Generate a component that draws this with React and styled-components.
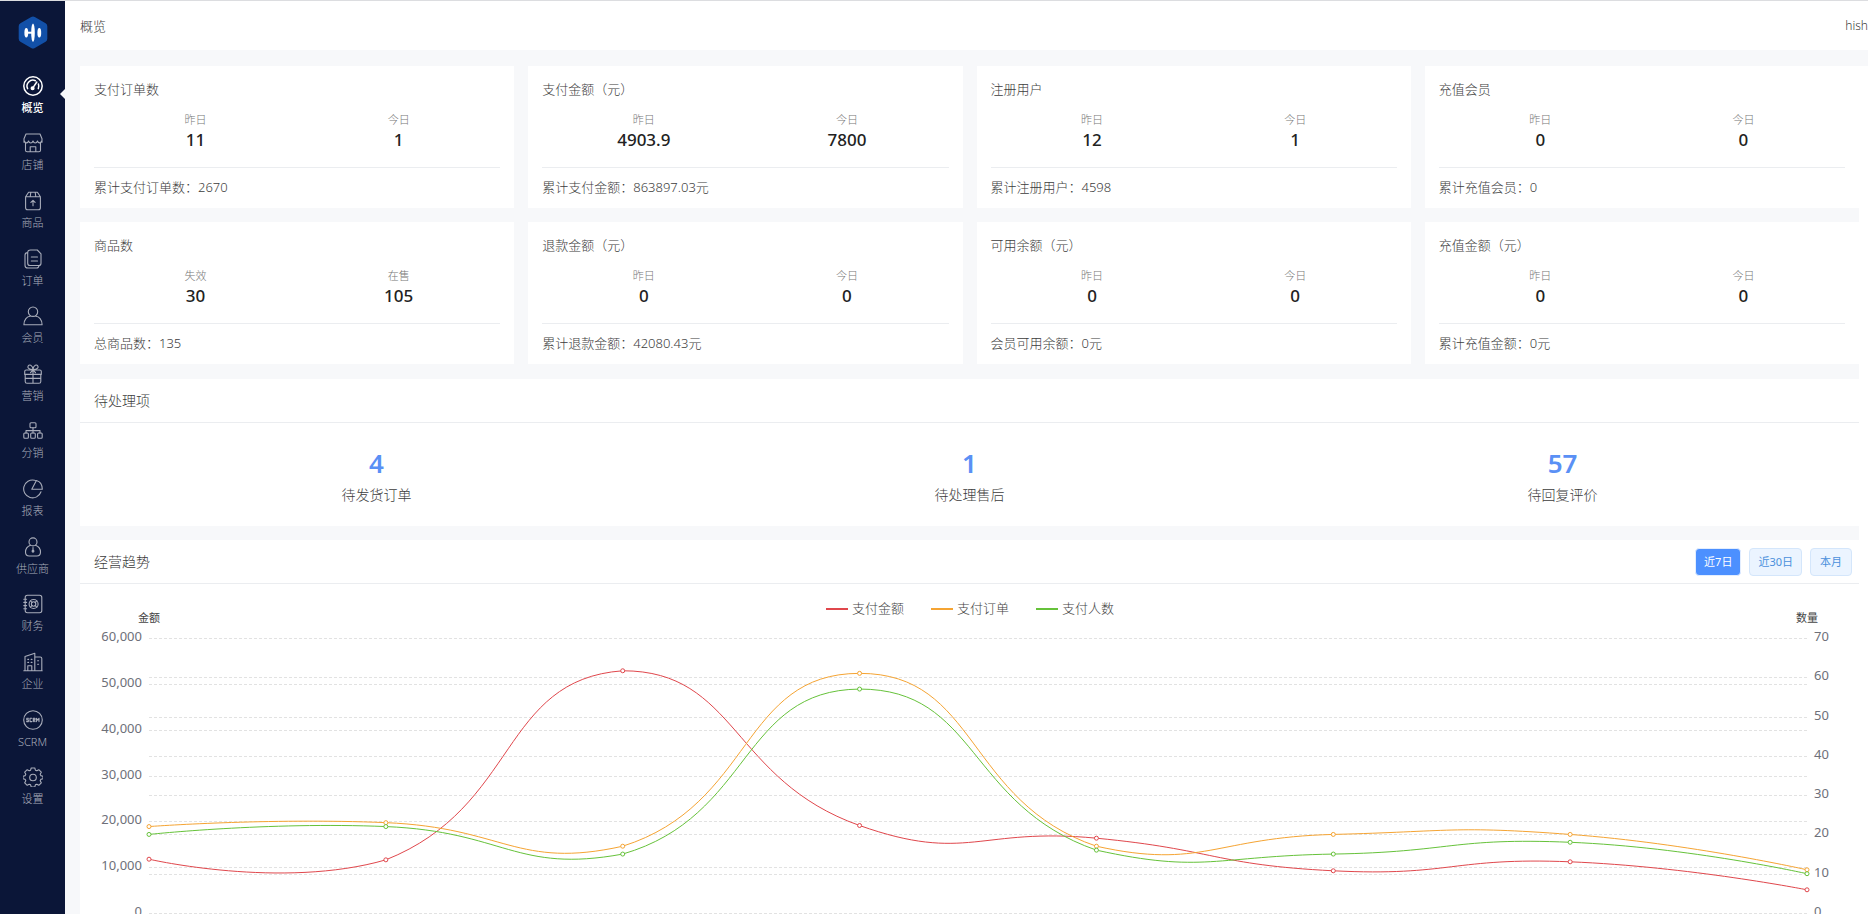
import React, { useLayoutEffect, useRef, useState } from 'react';
import styled, { createGlobalStyle } from 'styled-components';

const GlobalStyle = createGlobalStyle`
  * {
    box-sizing: border-box;
  }
  body {
    margin: 0;
    background: #f7f8fa;
    color: #3c3c3c;
    font-family: 'Noto Sans', 'Noto Sans CJK SC', sans-serif;
    font-size: 13px;
    line-height: 20px;
  }
  a {
    color: inherit;
    text-decoration: none;
  }
  h1, h2, p, dl, dd {
    margin: 0;
    font-weight: 300;
  }
`

const Layout = styled.div`
  display: flex;
  height: 100vh;
  overflow: hidden;
  border-top: 1px solid #dcdde0;
`

const Sidebar = styled.aside`
  flex: none;
  width: 65px;
  background: #0b1638;
`

const LogoLink = styled.a`
  display: flex;
  justify-content: center;
  height: 66px;
  padding-top: 15px;
`

const Nav = styled.nav`
  display: flex;
  flex-direction: column;
  height: 749px;
`

const NavItem = styled.a`
  position: relative;
  flex: 1;
  display: flex;
  flex-direction: column;
  align-items: center;
  justify-content: center;
  gap: 4px;
  font-size: 11px;
  line-height: 16px;
  color: ${({ $active }) => ($active ? '#fff' : '#a9adba')};
  font-weight: ${({ $active }) => ($active ? 500 : 300)};
  svg {
    width: 20px;
    height: 20px;
    fill: none;
    stroke: currentColor;
    stroke-width: ${({ $active }) => ($active ? 1.5 : 1.1)};
    stroke-linecap: round;
    stroke-linejoin: round;
  }
  &::after {
    content: '';
    display: ${({ $active }) => ($active ? 'block' : 'none')};
    position: absolute;
    right: 0;
    top: 22px;
    border: 5px solid transparent;
    border-left-width: 0;
    border-right-color: #f7f8fa;
  }
`

const Main = styled.div`
  flex: 1;
  min-width: 0;
  display: flex;
  flex-direction: column;
`

const Header = styled.header`
  flex: none;
  display: flex;
  align-items: center;
  justify-content: space-between;
  height: 49px;
  margin-bottom: 16px;
  padding-left: 15px;
  background: #fff;
  h1 {
    font-size: 13px;
  }
`

const UserName = styled.span`
  font-size: 12px;
  font-weight: 300;
  white-space: nowrap;
`

const Scroller = styled.main`
  flex: 1;
  min-height: 0;
  overflow-y: auto;
  scrollbar-width: none;
  padding-left: 15px;
  border-right: 9px solid #fff;
`

const CardGrid = styled.section`
  display: grid;
  grid-template-columns: repeat(4, 1fr);
  gap: 14px;
  margin-bottom: 15px;
`

const Card = styled.article`
  padding: 13px 14px 0;
  background: #fff;
  h2 {
    font-size: 13px;
  }
`

const Stats = styled.dl`
  display: flex;
  height: 69px;
  padding-top: 13px;
  border-bottom: 1px solid #ebedf0;
`

const Stat = styled.div`
  flex: 1;
  text-align: center;
  dt {
    font-size: 11px;
    line-height: 16px;
    color: #777;
    font-weight: 300;
  }
  dd {
    font-size: 17px;
    line-height: 24px;
    color: #222;
    font-weight: 500;
  }
`

const Total = styled.p`
  height: 40px;
  line-height: 38px;
`

const Panel = styled.section`
  margin-bottom: 14px;
  background: #fff;
`

const PanelHead = styled.div`
  display: flex;
  align-items: center;
  justify-content: space-between;
  height: 44px;
  padding: 0 7px 0 14px;
  border-bottom: 1px solid #ebedf0;
  h2 {
    font-size: 14px;
  }
`

const TodoRow = styled.div`
  display: flex;
  height: 103px;
`

const TodoItem = styled.a`
  flex: 1;
  display: flex;
  flex-direction: column;
  align-items: center;
  justify-content: center;
  font-size: 14px;
  font-weight: 300;
  strong {
    margin-bottom: 4px;
    font-size: 26px;
    line-height: 36px;
    font-weight: 600;
    color: #5a90f5;
  }
`

const RangeGroup = styled.div`
  display: flex;
  gap: 8px;
`

const RangeButton = styled.button`
  min-width: 42px;
  height: 28px;
  padding: 0 8px;
  border: 1px solid ${({ $active }) => ($active ? '#e3eeff' : '#d4e6fb')};
  border-radius: 4px;
  background: ${({ $active }) => ($active ? '#4c90ff' : '#ebf4ff')};
  color: ${({ $active }) => ($active ? '#fff' : '#4a90dc')};
  font: inherit;
  font-size: 11px;
  line-height: 16px;
  cursor: pointer;
`

const ChartBox = styled.div`
  height: 380px;
  svg {
    display: block;
    width: 100%;
    height: 100%;
  }
`

const AxisText = styled.text`
  font-size: ${({ $small }) => ($small ? 11 : 13)}px;
  font-weight: ${({ $light }) => ($light ? 300 : 400)};
  fill: ${({ $small, $light }) => ($small || $light ? '#444' : '#6e7079')};
`

const icons = {
  overview: (
    <>
      <circle cx="10" cy="10" r="9.200" />
      <path d="M4.600 12.600A5.900 5.900 0 0 1 12.400 4.700M15.400 8a6 6 0 0 1-.1 4.600M13.800 6l-3.600 5.400" />
      <circle cx="9.600" cy="12.200" r="1.300" fill="currentColor" />
    </>
  ),
  shop: (
    <>
      <path d="M3 1h14l2 4.800v3.400h-1.200M2.200 9.200H1V5.800L3 1M1 7.600c1.500 3 3.600 3 4.500.4 1 2.600 3.600 2.600 4.500 0 1 2.600 3.500 2.600 4.500 0 1 2.600 3 2.600 4.500-.4M2.500 10v7.200c0 1 .6 1.600 1.600 1.600h11.800c1 0 1.600-.6 1.600-1.600V10M7.200 18.600v-4.900h5.600v4.900" />
    </>
  ),
  goods: (
    <path d="M2.600 5.800h14.800v11c0 1.200-.8 2-2 2H4.600c-1.200 0-2-.8-2-2zM2.600 5.800l3-4.600h8.800l3 4.600M7.200 5.800l.6-4.400M12.800 5.800l-.6-4.400M10 14.800V9.500M7.900 11.400 10 9.300l2.100 2.100" />
  ),
  order: (
    <path d="M7.500 1h6.800L18 4.800v9.400c0 1.500-.8 2.300-2.300 2.300H7c-1.500 0-2.300-.8-2.300-2.300V3.800C4.700 2 5.700 1 7.500 1zM4.700 3.600C2.800 3.600 2 4.500 2 6v10.200c0 1.700 1 2.800 2.800 2.800h8.800c1.300 0 2.100-.8 2.400-2.400M8.300 8h6.200M8.300 12h6.200" />
  ),
  member: (
    <>
      <circle cx="10" cy="5.700" r="4.700" />
      <path d="M.9 18.800c0-5.200 3.200-8.300 6.200-8.500M19.100 18.800c0-5.200-3.200-8.300-6.200-8.500M.9 18.800h18.200" />
    </>
  ),
  marketing: (
    <path d="M3.200 6h13.600c1 0 1.500.5 1.500 1.500v2.900H1.700V7.500C1.700 6.500 2.200 6 3.200 6zM2.200 10.400v7c0 1.200.6 1.800 1.800 1.800h12c1.200 0 1.800-.6 1.800-1.800v-7M2.200 14.400h15.600M10 5v14.200M10 5.500C5.500 5.500 4.400 3.500 5.200 2 6.200.3 9.400.6 10 5.500c.6-4.900 3.800-5.200 4.800-3.500.8 1.500-.3 3.500-4.800 3.500zM10 6 7.500 8.600M10 6l2.500 2.600" />
  ),
  dispatch: (
    <>
      <rect x="7" y="1.800" width="6" height="5" rx="1" />
      <path d="M10 6.800V12M3 12V9.600h14V12" />
      <rect x=".8" y="12" width="4.600" height="5.200" rx="1" />
      <rect x="7.700" y="12" width="4.600" height="5.200" rx="1" />
      <rect x="14.600" y="12" width="4.600" height="5.200" rx="1" />
    </>
  ),
  report: (
    <path d="M11.600 1.300A8.900 8.900 0 1 0 18 12.800M8.800 10.200l4.600-8.700c3.500.9 5.800 4.600 5.900 8.700zM13.400 1.500 11.600 1.300" />
  ),
  supplier: (
    <>
      <circle cx="10" cy="4.900" r="4" />
      <path d="M7.500 8.200C4.500 9.300 2.500 12 2.500 15c0 2.800 1.200 4 3.700 4h7.600c2.500 0 3.700-1.200 3.700-4 0-3-2-5.700-5-6.800M10 10.500v3.500" />
      <circle cx="10" cy="14.200" r=".9" fill="currentColor" />
    </>
  ),
  finance: (
    <>
      <rect x="2.200" y="1.200" width="16.600" height="17.600" rx="2.200" />
      <path d="M.8 5.200h2.800M.8 8.400h2.800M.8 11.600h2.800M.8 14.800h2.800M7.400 6.900l1.700 1.600M13.800 6.900l-1.700 1.600M7.400 13.100l1.700-1.600M13.800 13.100l-1.700-1.600" />
      <circle cx="10.600" cy="10" r="4.500" />
      <circle cx="10.600" cy="10" r="2.200" />
    </>
  ),
  company: (
    <path d="M2 18.800V4.600l9.800-3.400v17.600M11.800 5h5.400c1 0 1.600.6 1.600 1.600v12.200M.8 18.800h18.400M4.800 18.600v-4.800h4v4.800M4.800 7.400h.8M8.200 7.400H9M4.800 10.400h.8M8.200 10.400H9M14.600 8.800h1M14.600 12.200h1" />
  ),
  scrm: (
    <>
      <circle cx="10" cy="10" r="9.300" />
      <path d="M5.500 8.300H3.800v1.600h1.600v1.700H3.600M8.800 8.300H7v3.300h1.800M10.300 11.600V8.300h1.600v1.500h-1.600l1.700 1.800M13.400 11.600V8.300l1.300 1.800L16 8.300v3.300" />
    </>
  ),
  setting: (
    <>
      <path d="M8.200 1h3.600l.6 2.200 1.400.6 2-1.100 2.500 2.500-1.100 2 .6 1.400 2.200.6v2.600l-2.200.6-.6 1.400 1.100 2-2.500 2.500-2-1.100-1.400.6-.6 2.200H8.200l-.6-2.200-1.400-.6-2 1.100-2.500-2.500 1.100-2-.6-1.400L0 11.800V9.200l2.200-.6.6-1.400-1.100-2 2.500-2.500 2 1.100 1.400-.6z" />
      <circle cx="10" cy="10.500" r="3.300" />
    </>
  ),
};

const menu = [
  { key: 'overview', text: '概览' },
  { key: 'shop', text: '店铺' },
  { key: 'goods', text: '商品' },
  { key: 'order', text: '订单' },
  { key: 'member', text: '会员' },
  { key: 'marketing', text: '营销' },
  { key: 'dispatch', text: '分销' },
  { key: 'report', text: '报表' },
  { key: 'supplier', text: '供应商' },
  { key: 'finance', text: '财务' },
  { key: 'company', text: '企业' },
  { key: 'scrm', text: 'SCRM' },
  { key: 'setting', text: '设置' },
];

const cards = [
  { title: '支付订单数', stats: [['昨日', '11'], ['今日', '1']], total: '累计支付订单数：2670' },
  { title: '支付金额（元）', stats: [['昨日', '4903.9'], ['今日', '7800']], total: '累计支付金额：863897.03元' },
  { title: '注册用户', stats: [['昨日', '12'], ['今日', '1']], total: '累计注册用户：4598' },
  { title: '充值会员', stats: [['昨日', '0'], ['今日', '0']], total: '累计充值会员：0' },
  { title: '商品数', stats: [['失效', '30'], ['在售', '105']], total: '总商品数：135' },
  { title: '退款金额（元）', stats: [['昨日', '0'], ['今日', '0']], total: '累计退款金额：42080.43元' },
  { title: '可用余额（元）', stats: [['昨日', '0'], ['今日', '0']], total: '会员可用余额：0元' },
  { title: '充值金额（元）', stats: [['昨日', '0'], ['今日', '0']], total: '累计充值金额：0元' },
];

const todos = [
  { count: 4, text: '待发货订单' },
  { count: 1, text: '待处理售后' },
  { count: 57, text: '待回复评价' },
];

const ranges = ['近7日', '近30日', '本月'];

const series = [
  { name: '支付金额', color: '#e0474c', max: 60000, data: [11740, 11600, 52850, 19090, 16320, 9210, 11170, 5060] },
  { name: '支付订单', color: '#f5a433', max: 70, data: [22, 23, 17, 61, 17, 20, 20, 11] },
  { name: '支付人数', color: '#66c23a', max: 70, data: [20, 22, 15, 57, 16, 15, 18, 10] },
];

const PLOT = { left: 69, right: 52, top: 54, height: 275 };

// smooth curve through all points, handles kept inside the series' own bounds
function smoothPath(points) {
  const ys = points.map((p) => p[1]);
  const min = Math.min(...ys);
  const max = Math.max(...ys);
  const clamp = (y) => Math.min(max, Math.max(min, y));
  const dist = (a, b) => Math.hypot(a[0] - b[0], a[1] - b[1]);
  let d = `M${points[0]}`;
  let handle = points[0];
  for (let i = 1; i < points.length; i++) {
    const p = points[i];
    const prev = points[i - 1];
    const next = points[i + 1];
    if (!next) {
      d += `C${handle} ${p} ${p}`;
      break;
    }
    const ratio = dist(p, next) / (dist(p, next) + dist(p, prev));
    const vx = (next[0] - prev[0]) * 0.5;
    const vy = (next[1] - prev[1]) * 0.5;
    const cp = [p[0] - vx * (1 - ratio), clamp(p[1] - vy * (1 - ratio))];
    d += `C${handle} ${cp} ${p}`;
    handle = [p[0] + vx * ratio, clamp(p[1] + vy * ratio)];
  }
  return d;
}

function TrendChart() {
  const box = useRef(null);
  const [width, setWidth] = useState(1200);

  useLayoutEffect(() => {
    const update = () => setWidth(box.current.clientWidth);
    update();
    const observer = new ResizeObserver(update);
    observer.observe(box.current);
    return () => observer.disconnect();
  }, []);

  const { left, top, height } = PLOT;
  const right = width - PLOT.right;
  const toY = (value, max) => top + height - (value / max) * height;
  const lineY = (value, max) => Math.round(toY(value, max));
  const money = [0, 10000, 20000, 30000, 40000, 50000, 60000];
  const amount = [0, 10, 20, 30, 40, 50, 60, 70];
  const legendX = Math.round(width / 2) - 144;

  return (
    <ChartBox ref={box}>
      <svg role="img" aria-label="经营趋势">
        {series.map((s, i) => (
          <g key={s.name}>
            <path d={`M${legendX + i * 105} 25h22`} stroke={s.color} strokeWidth="2" />
            <AxisText $light x={legendX + i * 105 + 26} y="29">{s.name}</AxisText>
          </g>
        ))}
        <AxisText $small x={left} y="38" textAnchor="middle">金额</AxisText>
        <AxisText $small x={right} y="38" textAnchor="middle">数量</AxisText>
        <g stroke="#e2e2e2" strokeDasharray="3 2" transform="translate(0 .5)">
          {money.map((v) => <path key={v} d={`M${left} ${lineY(v, 60000)}H${right}`} />)}
          {amount.slice(1, 7).map((v) => <path key={v} d={`M${left} ${lineY(v, 70)}H${right}`} />)}
        </g>
        {money.map((v) => (
          <AxisText key={v} x={left - 7} y={lineY(v, 60000) + 3} textAnchor="end">{v.toLocaleString('en-US')}</AxisText>
        ))}
        {amount.map((v) => (
          <AxisText key={v} x={right + 7} y={lineY(v, 70) + 3}>{v}</AxisText>
        ))}
        {series.map((s) => {
          const points = s.data.map((v, i) => [left + ((right - left) * i) / 7, toY(v, s.max)]);
          return (
            <g key={s.name} stroke={s.color}>
              <path d={smoothPath(points)} fill="none" />
              {points.map(([x, y]) => <circle key={x} cx={x} cy={y} r="2" fill="#fff" />)}
            </g>
          );
        })}
      </svg>
    </ChartBox>
  )
}

function Logo() {
  return (
    <svg width="30" height="33" viewBox="0 0 30 33">
      <path d="M13.200 1a3.500 3.500 0 0 1 3.600 0l10.800 6.200a3.500 3.500 0 0 1 1.700 3v12.600a3.500 3.500 0 0 1-1.700 3L16.800 32a3.500 3.500 0 0 1-3.600 0L2.400 25.800a3.500 3.500 0 0 1-1.700-3V10.200a3.500 3.500 0 0 1 1.700-3z" fill="#1250a8" />
      <ellipse cx="8.300" cy="16.700" rx="1.900" ry="4.800" fill="#fff" />
      <ellipse cx="15" cy="16.700" rx="1.800" ry="9.300" fill="#fff" />
      <ellipse cx="21.300" cy="16.700" rx="1.900" ry="4.800" fill="#fff" />
      <path d="M8.300 16.700H15" stroke="#fff" strokeWidth="2" />
    </svg>
  )
}

export default function App() {
  const [range, setRange] = useState('近7日');

  return (
    <>
      <GlobalStyle />
      <Layout>
        <Sidebar>
          <LogoLink href="#" aria-label="首页"><Logo /></LogoLink>
          <Nav>
            {menu.map((item) => (
              <NavItem key={item.key} href={`#${item.key}`} $active={item.key === 'overview'}>
                <svg viewBox="0 0 20 20" aria-hidden="true">{icons[item.key]}</svg>
                {item.text}
              </NavItem>
            ))}
          </Nav>
        </Sidebar>
        <Main>
          <Header>
            <h1>概览</h1>
            <UserName>hish</UserName>
          </Header>
          <Scroller>
            <CardGrid>
              {cards.map((card) => (
                <Card key={card.title}>
                  <h2>{card.title}</h2>
                  <Stats>
                    {card.stats.map(([label, value]) => (
                      <Stat key={label}>
                        <dt>{label}</dt>
                        <dd>{value}</dd>
                      </Stat>
                    ))}
                  </Stats>
                  <Total>{card.total}</Total>
                </Card>
              ))}
            </CardGrid>
            <Panel>
              <PanelHead><h2>待处理项</h2></PanelHead>
              <TodoRow>
                {todos.map((todo) => (
                  <TodoItem key={todo.text} href="#todo">
                    <strong>{todo.count}</strong>
                    {todo.text}
                  </TodoItem>
                ))}
              </TodoRow>
            </Panel>
            <Panel>
              <PanelHead>
                <h2>经营趋势</h2>
                <RangeGroup>
                  {ranges.map((r) => (
                    <RangeButton key={r} type="button" $active={r === range} onClick={() => setRange(r)}>{r}</RangeButton>
                  ))}
                </RangeGroup>
              </PanelHead>
              <TrendChart />
            </Panel>
          </Scroller>
        </Main>
      </Layout>
    </>
  )
}
